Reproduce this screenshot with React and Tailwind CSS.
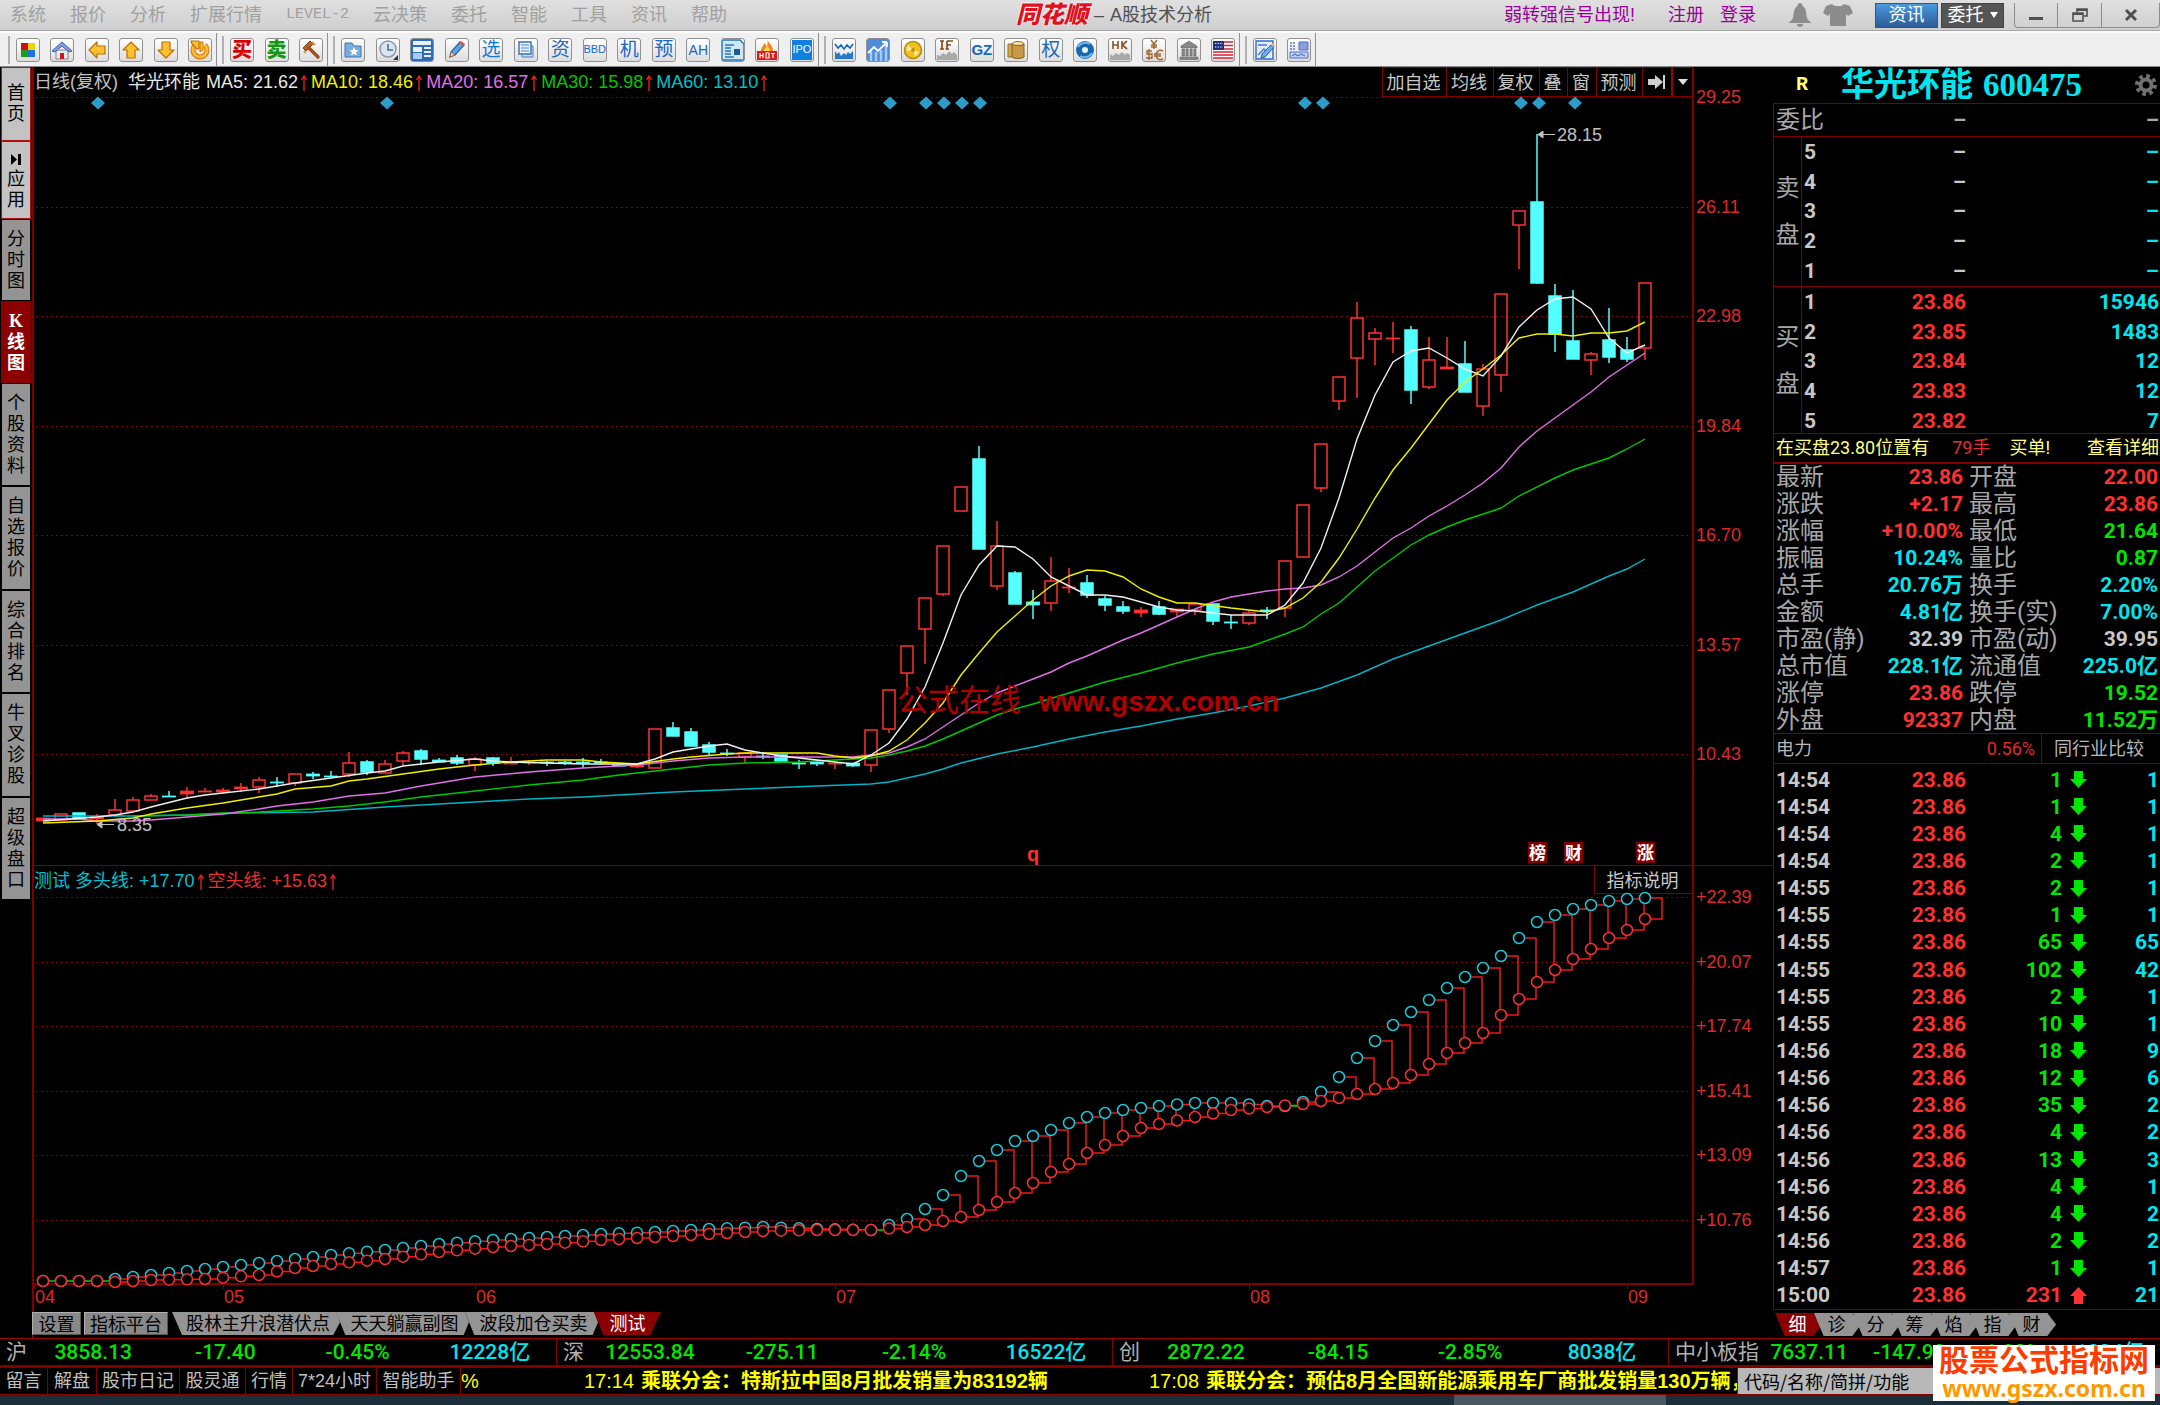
import React, { useState } from "react";

const MENUS = ["系统", "报价", "分析", "扩展行情", "LEVEL-2", "云决策", "委托", "智能", "工具", "资讯", "帮助"];

const SIDE_TABS = [
  { name: "首页", kind: "light", h: "h-[74px]" },
  { name: "应用", kind: "light", h: "h-[78px]", icon: true },
  { name: "分时图", kind: "grey", h: "h-[82px]" },
  { name: "K线图", kind: "active", h: "h-[82px]" },
  { name: "个股资料", kind: "grey", h: "h-[103px]" },
  { name: "自选报价", kind: "grey", h: "h-[104px]" },
  { name: "综合排名", kind: "grey", h: "h-[103px]" },
  { name: "牛叉诊股", kind: "grey", h: "h-[104px]" },
  { name: "超级盘口", kind: "grey", h: "h-[103px]" },
];

const SIDE_STYLES = {
  light: "bg-[#c3c3c3] text-black border border-[#b01010]",
  grey: "bg-[#949494] text-black border border-black",
  active: "bg-[#8b0000] text-white font-bold border border-[#8b0000]",
};

const MA_LABELS = [
  ["MA5: 21.62", "text-[#e8e8e8]"],
  ["MA10: 18.46", "text-[#f0f000]"],
  ["MA20: 16.57", "text-[#e070e8]"],
  ["MA30: 15.98", "text-[#00c800]"],
  ["MA60: 13.10", "text-[#00c0c8]"],
];

const CHART_BUTTONS = [
  ["加自选", "w-[64px]"],
  ["均线", "w-[47px]"],
  ["复权", "w-[46px]"],
  ["叠", "w-[28px]"],
  ["窗", "w-[29px]"],
  ["预测", "w-[46px]"],
];

// [colour, high, body top, body bottom, low]
const CANDLES = [
  ["r", 818, 818, 821, 821], ["r", 814, 814, 820, 820], ["c", 813, 813, 819, 819], ["r", 814, 817, 819, 824],
  ["r", 799, 810, 815, 815], ["r", 797, 800, 811, 812], ["r", 794, 796, 800, 800], ["c", 791, 796, 797, 797],
  ["r", 787, 791, 794, 797], ["r", 788, 791, 792, 792], ["r", 788, 790, 792, 793], ["r", 783, 787, 789, 792],
  ["r", 777, 780, 787, 793], ["c", 777, 782, 783, 787], ["r", 774, 774, 783, 786], ["c", 772, 774, 776, 779],
  ["c", 771, 776, 777, 777], ["r", 752, 763, 774, 777], ["c", 760, 762, 772, 775], ["r", 760, 764, 773, 773],
  ["r", 751, 753, 761, 765], ["c", 749, 751, 759, 765], ["c", 758, 760, 762, 762], ["c", 755, 758, 763, 765],
  ["r", 757, 759, 765, 771], ["c", 757, 758, 763, 766], ["r", 757, 762, 764, 764], ["r", 760, 762, 763, 765],
  ["c", 761, 762, 763, 766], ["c", 761, 762, 763, 765], ["c", 758, 762, 763, 768], ["c", 759, 762, 763, 764],
  ["c", 765, 765, 766, 766], ["r", 763, 765, 767, 768], ["r", 729, 729, 768, 768], ["c", 722, 728, 736, 736],
  ["c", 728, 732, 746, 746], ["c", 742, 745, 752, 756], ["c", 749, 753, 754, 756], ["r", 753, 753, 757, 763],
  ["c", 753, 756, 757, 759], ["c", 755, 755, 761, 761], ["c", 760, 763, 764, 769], ["c", 760, 762, 764, 766],
  ["r", 761, 763, 764, 769], ["c", 763, 763, 766, 767], ["r", 730, 730, 765, 772], ["r", 690, 690, 729, 733],
  ["r", 646, 646, 673, 695], ["r", 598, 598, 629, 664], ["r", 546, 546, 594, 596], ["r", 487, 487, 511, 511],
  ["c", 446, 459, 549, 549], ["r", 521, 546, 586, 590], ["c", 571, 573, 604, 604], ["c", 590, 602, 605, 619],
  ["r", 557, 581, 603, 611], ["r", 568, 587, 588, 593], ["c", 575, 583, 595, 598], ["c", 596, 599, 605, 611],
  ["c", 601, 607, 611, 614], ["r", 607, 610, 613, 617], ["c", 601, 607, 614, 615], ["r", 609, 609, 612, 617],
  ["r", 604, 604, 610, 615], ["c", 604, 604, 621, 625], ["c", 615, 622, 623, 629], ["r", 611, 613, 623, 625],
  ["c", 607, 610, 611, 619], ["r", 561, 561, 608, 617], ["r", 505, 505, 557, 557], ["r", 444, 444, 488, 492],
  ["r", 377, 377, 401, 410], ["r", 302, 318, 358, 398], ["r", 328, 333, 339, 365], ["r", 322, 338, 339, 353],
  ["c", 326, 330, 390, 404], ["r", 337, 360, 387, 389], ["r", 337, 367, 369, 369], ["c", 341, 364, 392, 392],
  ["r", 364, 369, 406, 416], ["r", 294, 294, 375, 392], ["r", 211, 211, 225, 269], ["c", 134, 202, 283, 284],
  ["c", 284, 296, 334, 352], ["c", 290, 341, 359, 359], ["r", 352, 354, 360, 375], ["c", 308, 340, 357, 363],
  ["c", 337, 350, 359, 362], ["r", 283, 283, 348, 360],
];

// [bar index, y]
const MA_LINES = [
  ["#00b4c8", [[0, 816], [5, 816], [8, 815], [11, 813], [15, 812], [19, 807], [24, 802], [27, 799], [30, 797], [33, 794], [35, 792], [39, 789], [43, 786], [46, 784], [47, 782], [48, 778], [49, 774], [50, 769], [51, 763], [53, 754], [55, 747], [57, 739], [59, 732], [61, 726], [63, 719], [65, 713], [67, 706], [69, 698], [71, 688], [73, 675], [75, 659], [77, 646], [79, 633], [81, 620], [83, 605], [85, 592], [87, 576], [88, 569], [89, 559]]],
  ["#00c800", [[5, 816], [8, 815], [10, 813], [12, 812], [15, 809], [17, 806], [19, 802], [21, 797], [24, 791], [27, 785], [30, 780], [32, 775], [34, 771], [37, 765], [39, 763], [42, 762], [46, 758], [47, 755], [48, 751], [49, 746], [50, 739], [51, 731], [52, 723], [53, 715], [54, 709], [55, 704], [57, 693], [59, 682], [61, 673], [63, 663], [65, 654], [67, 647], [69, 634], [70, 627], [71, 614], [72, 603], [73, 587], [74, 571], [75, 558], [76, 545], [77, 535], [78, 527], [79, 520], [81, 508], [82, 496], [84, 478], [85, 470], [87, 458], [88, 449], [89, 439]]],
  ["#e070e8", [[0, 819], [2, 819], [3, 821], [5, 821], [6, 820], [8, 817], [10, 814], [12, 809], [13, 806], [15, 802], [17, 796], [19, 793], [21, 786], [24, 777], [27, 772], [30, 768], [33, 765], [35, 761], [37, 758], [39, 757], [45, 757], [47, 753], [48, 747], [49, 739], [50, 727], [51, 715], [52, 703], [53, 693], [54, 686], [55, 679], [56, 672], [57, 663], [58, 656], [59, 648], [60, 640], [61, 633], [62, 625], [63, 617], [64, 609], [65, 602], [66, 597], [67, 594], [68, 591], [69, 589], [70, 588], [71, 585], [72, 577], [73, 566], [74, 552], [75, 538], [76, 528], [77, 516], [78, 506], [79, 495], [80, 483], [81, 468], [82, 447], [83, 431], [84, 418], [85, 405], [86, 392], [87, 377], [88, 365], [89, 353]]],
  ["#f0f000", [[0, 823], [3, 821], [5, 818], [6, 814], [8, 808], [10, 803], [11, 800], [13, 794], [14, 789], [16, 786], [17, 781], [18, 779], [20, 774], [22, 769], [24, 765], [26, 762], [28, 760], [30, 760], [31, 762], [33, 764], [35, 759], [36, 757], [38, 754], [39, 753], [43, 753], [44, 756], [45, 758], [46, 756], [47, 751], [48, 740], [49, 723], [50, 703], [51, 675], [52, 653], [53, 632], [54, 616], [55, 600], [56, 586], [57, 576], [58, 570], [59, 571], [60, 577], [61, 589], [62, 597], [63, 603], [64, 603], [66, 608], [67, 610], [68, 612], [69, 608], [70, 598], [71, 582], [72, 558], [73, 529], [74, 498], [75, 470], [76, 448], [77, 424], [78, 400], [79, 382], [80, 369], [81, 355], [82, 338], [83, 334], [84, 334], [85, 336], [86, 333], [87, 333], [88, 331], [89, 322]]],
  ["#f0f0f0", [[0, 821], [3, 817], [4, 815], [5, 812], [6, 807], [8, 798], [9, 795], [10, 793], [12, 789], [13, 786], [14, 783], [16, 778], [18, 773], [19, 771], [20, 766], [22, 762], [24, 759], [25, 761], [26, 762], [28, 763], [30, 764], [33, 764], [34, 759], [35, 752], [36, 749], [37, 746], [38, 744], [39, 750], [41, 756], [43, 760], [45, 764], [46, 755], [47, 743], [48, 719], [49, 687], [50, 643], [51, 595], [52, 565], [53, 546], [54, 547], [55, 559], [56, 577], [57, 586], [58, 595], [59, 595], [60, 597], [62, 607], [63, 610], [64, 611], [66, 615], [68, 615], [69, 605], [70, 583], [71, 548], [72, 498], [73, 439], [74, 395], [75, 362], [76, 351], [77, 348], [78, 358], [79, 369], [80, 376], [81, 356], [82, 327], [83, 310], [84, 299], [85, 297], [86, 309], [87, 338], [88, 353], [89, 345]]],
];

const GRID_MAIN = [[97, "29.25"], [207, "26.11"], [316, "22.98"], [426, "19.84"], [535, "16.70"], [645, "13.57"], [754, "10.43"]];
const GRID_SUB = [[897, "+22.39"], [962, "+20.07"], [1026, "+17.74"], [1091, "+15.41"], [1155, "+13.09"], [1220, "+10.76"]];
const DIAMONDS = [98, 387, 890, 926, 944, 962, 980, 1305, 1323, 1521, 1539, 1575];
const MONTHS = [[34, "04"], [223, "05"], [475, "06"], [835, "07"], [1249, "08"], [1627, "09"]];

const BULL = [[0, 1281], [3, 1281], [4, 1279], [5, 1277], [7, 1273], [9, 1269], [11, 1265], [14, 1259], [16, 1255], [19, 1250], [22, 1244], [25, 1240], [28, 1237], [31, 1234], [34, 1232], [37, 1229], [40, 1227], [43, 1229], [46, 1230], [47, 1225], [48, 1219], [49, 1209], [50, 1195], [51, 1176], [52, 1161], [53, 1150], [54, 1141], [55, 1136], [56, 1130], [57, 1123], [58, 1117], [59, 1113], [60, 1110], [62, 1106], [64, 1103], [66, 1103], [68, 1106], [69, 1106], [70, 1102], [71, 1092], [72, 1077], [73, 1058], [74, 1041], [75, 1025], [76, 1012], [77, 1000], [78, 988], [79, 977], [80, 968], [81, 956], [82, 938], [83, 922], [84, 915], [85, 909], [86, 905], [87, 901], [88, 899], [89, 898]];
const BEAR = [[0, 1281], [3, 1281], [4, 1282], [6, 1280], [9, 1279], [12, 1275], [14, 1268], [16, 1264], [19, 1259], [22, 1252], [25, 1247], [28, 1244], [31, 1240], [34, 1237], [37, 1234], [40, 1231], [43, 1230], [46, 1230], [48, 1227], [49, 1225], [50, 1221], [51, 1217], [52, 1210], [53, 1202], [54, 1193], [55, 1183], [56, 1172], [57, 1164], [58, 1153], [59, 1145], [60, 1136], [61, 1128], [62, 1124], [64, 1117], [66, 1110], [68, 1107], [70, 1104], [71, 1101], [72, 1098], [73, 1094], [74, 1089], [75, 1083], [76, 1075], [77, 1064], [78, 1053], [79, 1043], [80, 1033], [81, 1015], [82, 999], [83, 982], [84, 970], [85, 959], [86, 949], [87, 938], [88, 930], [89, 919]];

const SELL = [5, 4, 3, 2, 1];
const BUY = [[1, "23.86", "15946"], [2, "23.85", "1483"], [3, "23.84", "12"], [4, "23.83", "12"], [5, "23.82", "7"]];

const R = "text-[#ff3030]";
const G = "text-[#00e600]";
const C = "text-[#00e5ee]";
const W = "text-[#c8c8c8]";

const STATS = [
  ["最新", "23.86", R, "开盘", "22.00", R],
  ["涨跌", "+2.17", R, "最高", "23.86", R],
  ["涨幅", "+10.00%", R, "最低", "21.64", G],
  ["振幅", "10.24%", C, "量比", "0.87", G],
  ["总手", "20.76万", C, "换手", "2.20%", C],
  ["金额", "4.81亿", C, "换手(实)", "7.00%", C],
  ["市盈(静)", "32.39", W, "市盈(动)", "39.95", W],
  ["总市值", "228.1亿", C, "流通值", "225.0亿", C],
  ["涨停", "23.86", R, "跌停", "19.52", G],
  ["外盘", "92337", R, "内盘", "11.52万", G],
];

const TICKS = [
  ["14:54", 1, 1], ["14:54", 1, 1], ["14:54", 4, 1], ["14:54", 2, 1], ["14:55", 2, 1],
  ["14:55", 1, 1], ["14:55", 65, 65], ["14:55", 102, 42], ["14:55", 2, 1], ["14:55", 10, 1],
  ["14:56", 18, 9], ["14:56", 12, 6], ["14:56", 35, 2], ["14:56", 4, 2], ["14:56", 13, 3],
  ["14:56", 4, 1], ["14:56", 4, 2], ["14:56", 2, 2], ["14:57", 1, 1], ["15:00", 231, 21, true],
];

const INDEXES = [
  ["沪", "3858.13", "-17.40", "-0.45%", "12228亿"],
  ["深", "12553.84", "-275.11", "-2.14%", "16522亿"],
  ["创", "2872.22", "-84.15", "-2.85%", "8038亿"],
  ["中小板指", "7637.11", "-147.99", "-1.90%", "1234亿"],
];

const LINKS = [
  ["留言", "w-[48px]"],
  ["解盘", "w-[49px]"],
  ["股市日记", "w-[83px]"],
  ["股灵通", "w-[66px]"],
  ["行情", "w-[47px]"],
  ["7*24小时", "w-[84px]"],
  ["智能助手", "w-[84px]"],
];

const barX = (i) => 43 + i * 18;

function valueAt(line, i) {
  const k = line.findIndex((p) => p[0] >= i);
  if (k <= 0) return line[0][1];
  const [x0, y0] = line[k - 1];
  const [x1, y1] = line[k];
  return y0 + ((y1 - y0) * (i - x0)) / (x1 - x0);
}

function Arrow() {
  return (
    <svg className="mr-1 ml-[3px] inline-block h-4 w-[6px] align-[-3px]" viewBox="0 0 6 16" fill="none" stroke="#e02020" strokeWidth="1.4">
      <path d="M3 16V1M0.5 5L3 1l2.5 4" />
    </svg>
  );
}

function TextIcon({ children, className }) {
  return <span className={"leading-none " + className}>{children}</span>;
}

function Draw({ children }) {
  return (
    <svg className="size-full" viewBox="0 0 22 22" fill="none">
      {children}
    </svg>
  );
}

const ARROW_PROPS = { fill: "#ffc030", stroke: "#b87008", strokeWidth: 1.2, strokeLinejoin: "round" };

const TOOL_GROUPS = [
  {
    width: "w-[196px]",
    items: [
      ["板块", <Draw><path fill="#d01010" d="M4 4h7v7H4z" /><path fill="#e8d800" d="M11 4h7v7h-7z" /><path fill="#18a018" d="M4 11h7v7H4z" /><path fill="#2070e0" d="M11 11h7v7h-7z" /></Draw>],
      ["首页", <Draw><path d="M5 11h12v9H5z" fill="#e8e8f0" stroke="#888" /><path d="M1 12L11 3l10 9-3 1-7-6-7 6z" fill="#7f9fe0" stroke="#4060b0" /><path fill="#c81818" d="M9 14h4v6H9z" /></Draw>],
      ["后退", <Draw><path {...ARROW_PROPS} d="M3 11l8-8v4h8v8h-8v4z" /></Draw>],
      ["上移", <Draw><path {...ARROW_PROPS} d="M11 3l8 8h-4v8H7v-8H3z" /></Draw>],
      ["下移", <Draw><path {...ARROW_PROPS} d="M11 19l8-8h-4V3H7v8H3z" /></Draw>],
      ["刷新", <Draw><path d="M6 6a7 7 0 1 0 10 0" stroke="#d07808" strokeWidth="5" /><path d="M6 6a7 7 0 1 0 10 0" stroke="#ffb830" strokeWidth="3" /><path {...ARROW_PROPS} d="M2 2h8v8H8L3 5z" /><path d="M11 3h3v8l-3 2z" fill="#ffb830" stroke="#d07808" /></Draw>],
    ],
  },
  {
    width: "w-[93px]",
    items: [
      ["买", <TextIcon className="text-[20px] font-black text-[#d80000]">买</TextIcon>],
      ["卖", <TextIcon className="text-[20px] font-black text-[#109810]">卖</TextIcon>],
      ["委托", <Draw><path d="M3 9l7-7 3 3-7 7z" fill="#b86428" stroke="#7a3a10" /><path d="M9 9l9 9" stroke="#a05020" strokeWidth="3.5" strokeLinecap="round" /><path d="M4 12l2 2M12 3l3 3" stroke="#d89060" strokeWidth="2" /></Draw>],
    ],
  },
  {
    width: "w-[473px]",
    items: [
      ["自选股", <Draw><path d="M3 4h7l2 3h7v11H3z" fill="#7aaede" stroke="#3c74b0" /><path fill="#fff" d="M12 8l1.3 3 3.2.2-2.5 2 .9 3.2L12 14.700l-2.900 1.700.900-3.200-2.500-2 3.200-.2z" /></Draw>],
      ["定时", <Draw><circle cx="11" cy="10" r="8" fill="#dce4ec" stroke="#8898a8" strokeWidth="1.500" /><path d="M11 5v6h5" stroke="#4070b0" strokeWidth="1.600" /><path d="M21 16v5h-5z" fill="#333" /></Draw>],
      ["资讯", <Draw><path fill="#2e6cb8" d="M0 0h22v22H0z" /><path fill="#e8f2fc" d="M2 2h18v4H2zM2 8h9v5H2zM13 8h7v2h-7zM13 12h7v2h-7zM13 16h7v2h-7z" /><path fill="#a8ccf0" d="M2 14h9v6H2z" /></Draw>],
      ["画线", <Draw><path d="M4 18l1-5 9-10 4 3-9 10z" fill="#58a8e8" stroke="#2868a8" strokeWidth="1.300" /><path d="M13 4l4 3 2-2-4-3z" fill="#e05050" /><path d="M4 18l5-2-4-3z" fill="#f0d0a0" stroke="#805020" strokeWidth=".6" /></Draw>],
      ["选", <TextIcon className="text-[19px] text-[#1878d0]">选</TextIcon>],
      ["报表", <Draw><path d="M7 7h11v11H7z" fill="#c8dcf0" stroke="#4c80b8" /><path d="M4 3h12v12H4z" fill="#e8f2fc" stroke="#3c70b0" strokeWidth="1.400" /><path d="M6 6h8M6 9h8M6 12h8" stroke="#5088c8" /></Draw>],
      ["资", <TextIcon className="text-[19px] text-[#2868b8]">资</TextIcon>],
      ["BBD", <TextIcon className="text-[11px] text-[#1868c8]">BBD</TextIcon>],
      ["机", <TextIcon className="text-[19px] text-[#1868c8]">机</TextIcon>],
      ["预", <TextIcon className="text-[19px] text-[#1868c8]">预</TextIcon>],
      ["AH", <TextIcon className="text-[14px] text-[#1868c8]">AH</TextIcon>],
      ["公告", <Draw><path d="M0 1h18l4 4v16H0z" fill="#cfe6f6" stroke="#2878b0" strokeWidth="1.500" /><path d="M3 6h9M3 9h6M3 12h6M3 15h6M3 18h9" stroke="#2878b0" strokeWidth="1.300" /><path fill="#1c5c90" d="M12 10h6v6h-6z" /></Draw>],
      ["热点", <Draw><path d="M11 0c1 4 6 6 6 12H5c0-4 3-5 3-8 2 1 2 2 2 4 2-2 2-4 1-8z" fill="#f88020" /><path d="M11 6c1 2 3 4 3 6H8c0-3 3-3 3-6z" fill="#ffd840" /><path fill="#e01818" d="M1 12h20v9H1z" /><path d="M4 14v5M7 14v5M4 16.500h3M10 14h3v5h-3zM15 14.500h4M17 14.500v4.500" stroke="#fff" strokeWidth="1.200" /></Draw>],
      ["IPO", <TextIcon className="flex size-5 items-center justify-center bg-[#1080e0] text-[11px] text-white">IPO</TextIcon>],
    ],
  },
  {
    width: "w-[403px]",
    items: [
      ["大盘", <Draw><path d="M2 5l3 4 3-3 3 4 3-4 3 3 3-4" stroke="#1868b8" strokeWidth="1.600" /><path fill="#2878c8" d="M2 20v-8l2 3 2-2 2 4 3-3 2 2 2-3 2 2 3-3v8z" /></Draw>],
      ["走势", <Draw><path fill="#4c8cd8" d="M0 0h22v22H0z" /><path d="M4 22V12M9 22v-9M14 22V11M19 22V6" stroke="#a8ccf0" strokeWidth="2.500" /><path d="M1 14l6-6 4 4 9-9M20 3h-5M20 3v5" stroke="#fff" strokeWidth="1.800" /></Draw>],
      ["期货", <Draw><circle cx="11" cy="11" r="8.500" fill="#f0c020" stroke="#b88808" strokeWidth="1.500" /><path d="M11 11L6 6a7 7 0 0 0-1 6zM11 11l2 6a7 7 0 0 0 4-4z" fill="#fff0a0" /><circle cx="11" cy="11" r="2" fill="#c89010" /></Draw>],
      ["IF", <Draw><path d="M4 2h4M6 2v8M4 10h4M11 2v8M11 2h6M11 6h4M9.500 10h3.500" stroke="#8a4a18" strokeWidth="1.700" /><path fill="#a8a8a8" d="M1 21v-5l3 1 3-3 3 2 3-4 3 3 2-2 3 3v5z" /></Draw>],
      ["GZ", <TextIcon className="text-[15px] font-bold text-[#1868b8]">GZ</TextIcon>],
      ["基金", <Draw><path d="M3 5h9v13H3z" fill="#d8a848" stroke="#907028" /><ellipse cx="13" cy="5" rx="6" ry="2.500" fill="#f8e0a0" stroke="#907028" /><path d="M7 5v13c2 2 10 2 12 0V5c-2 2-10 2-12 0z" fill="#c89848" stroke="#806020" /></Draw>],
      ["权", <TextIcon className="text-[19px] text-[#1868b8]">权</TextIcon>],
      ["全球", <Draw><circle cx="11" cy="11" r="9" fill="#1868b0" /><path d="M4 8c3-5 9-5 12-3M18 14c-3 5-9 5-12 3" stroke="#70b8e8" strokeWidth="2" /><circle cx="11" cy="11" r="3" fill="#e8f4ff" /></Draw>],
      ["HK", <Draw><path d="M4 2v8M9 2v8M4 6h5M13 2v8M18 2l-4.500 4L18 10" stroke="#8a5a30" strokeWidth="1.700" /><path fill="#a8a8a8" d="M1 21v-6l3 2 3-3 3 2 3-3 3 3 2-2 3 2v5z" /></Draw>],
      ["外汇", <Draw><path d="M8 1l3 4 3-4M11 5v5M8 6h6M8 8h6" stroke="#a06830" strokeWidth="1.400" /><path d="M9 12H4v3h5v4H3M6 10v11M20 12c-4-2-7 1-7 4s3 6 7 4M11 15h7M11 17h7" stroke="#a06830" strokeWidth="1.400" /></Draw>],
      ["债券", <Draw><path d="M11 2l8 5v2H3V7zM4 10h2.500v7H4zM8 10h2.200v7H8zM12 10h2.200v7H12zM15.800 10H18v7h-2.200zM2 18h18v2.500H2z" fill="#888" stroke="#555" strokeWidth=".5" /></Draw>],
      ["美股", <Draw><path fill="#fff" d="M1 2h20v18H1z" /><path d="M1 3h20M1 6.500h20M1 10h20M1 13h20M1 16h20M1 19h20" stroke="#d02030" strokeWidth="1.600" /><path fill="#203080" d="M1 2h11v9H1z" /><path d="M3 4.500h8M3 8h8" stroke="#fff" strokeDasharray="1.300 1.300" /></Draw>],
    ],
  },
  {
    width: "w-[58px]",
    items: [
      ["编辑", <Draw><path d="M2 2h17v18H2z" fill="#e0ecfc" stroke="#3868c0" strokeWidth="1.400" /><path d="M4 6h9M4 16l6-6 3 3 5-6" stroke="#4878c8" strokeWidth="1.500" /><path d="M7 19l1-4 9-9 3 2-9 10z" fill="#68b0e8" stroke="#2858a0" /><path d="M17 6l3 2 1-2-2-2z" fill="#f0b060" /></Draw>],
      ["布局", <Draw><path d="M2 4h6M2 7h6M2 10h6" stroke="#5878c0" strokeWidth="1.500" strokeDasharray="2 1" /><path fill="#88a0e0" d="M11 3h9v8h-9z" stroke="#5070c0" /><path fill="#c0d0f8" d="M2 13h18v6H2z" stroke="#5070c0" /><path d="M4 17l3-2 3 2 3-2 4 2" stroke="#3858b0" /></Draw>],
    ],
  },
];

function TitleBar() {
  return (
    <header className="flex h-[31px] items-center border-b border-[#a8a8a8] bg-gradient-to-b from-[#e0e0e0] to-[#cfcfcf] pl-[10px] text-[18px] leading-[30px]">
      <nav className="flex flex-1 items-center gap-6 text-[#a0a0a0]">
        {MENUS.map((m) => (
          <button key={m} className={m === "LEVEL-2" ? "[font-family:'Liberation_Mono',monospace] text-[15px]" : ""}>
            {m}
          </button>
        ))}
      </nav>
      <h1 className="ml-[58px] flex items-center gap-[6px] text-[#505050]">
        <span className="text-[24px] font-black text-[#e01020] italic [text-shadow:0_0_2px_#fff,0_0_2px_#fff]">同花顺</span>
        <span>–</span>
        <span>A股技术分析</span>
      </h1>
      <div className="flex flex-1 items-center justify-end text-[#990099]">
        <a href="#signal">弱转强信号出现!</a>
        <a href="#register" className="ml-[33px]">注册</a>
        <a href="#login" className="ml-4">登录</a>
        <button aria-label="提醒" className="ml-[33px]">
          <svg className="h-6 w-[22px]" viewBox="0 0 22 24" fill="#8c8c8c">
            <path d="M11 0c2 0 2.500 1.500 2.500 3C18 5 17 12 18 15c.500 2 4 4 4 5H0c0-1 3.500-3 4-5C5 12 4 5 8.500 3 8.500 1.500 9 0 11 0zM8 21h6c0 4-6 4-6 0z" />
          </svg>
        </button>
        <button aria-label="换肤" className="mr-[22px] ml-3">
          <svg className="h-[22px] w-[30px]" viewBox="0 0 30 22" fill="#8c8c8c">
            <path d="M9 0c2 3 10 3 12 0l6 2 3 7-5 3-2-2v12H7V10l-2 2-5-3 3-7z" />
          </svg>
        </button>
        <button className="h-[25px] w-[63px] border border-[#2a5a90] bg-gradient-to-b from-[#4a9ae0] to-[#2c5c98] leading-[22px] text-white">资讯</button>
        <button className="ml-[3px] flex h-[25px] w-[63px] items-center justify-center gap-[6px] border border-[#444] bg-[#555] leading-[22px] text-white">
          委托
          <svg className="h-[6px] w-2" viewBox="0 0 8 6" fill="#fff"><path d="M0 0h8L4 6z" /></svg>
        </button>
        <div className="ml-[10px] flex h-[25px] rounded-b-sm border border-t-0 border-[#8c8c8c]">
          <button aria-label="最小化" className="flex w-[43px] items-center justify-center border-r border-[#8c8c8c]">
            <svg className="size-4" viewBox="0 0 16 16"><path fill="#505050" d="M1 10h14v3H1z" /></svg>
          </button>
          <button aria-label="还原" className="flex w-[44px] items-center justify-center border-r border-[#8c8c8c]">
            <svg className="size-4" viewBox="0 0 16 16" fill="none" stroke="#505050" strokeWidth="1.600"><path d="M5 5V2h10v7h-3M1 6h10v8H1z" /><path d="M1 7h10M5 3h10" strokeWidth="2" /></svg>
          </button>
          <button aria-label="关闭" className="flex w-[57px] items-center justify-center">
            <svg className="size-4" viewBox="0 0 16 16" stroke="#505050" strokeWidth="3"><path d="M3 3l10 10M13 3L3 13" /></svg>
          </button>
        </div>
      </div>
    </header>
  );
}

function ToolBar() {
  return (
    <div className="flex h-9 items-center gap-[3px] border-t-2 border-b border-t-[#fafafa] border-b-[#888] bg-[#efefef] pl-[6px]">
      {TOOL_GROUPS.map((g) => (
        <div key={g.width} className="flex h-full items-center border-r border-[#909090] pr-1">
          <span className="mr-[6px] h-7 w-1 border-r-2 border-[#b0b0b0]" />
          <div className={"flex justify-between " + g.width}>
            {g.items.map(([name, icon]) => (
              <button
                key={name}
                aria-label={name}
                className="flex size-6 items-center justify-center overflow-hidden rounded-[3px] border border-[#909090] bg-gradient-to-b from-white to-[#dcdcdc]"
              >
                {icon}
              </button>
            ))}
          </div>
        </div>
      ))}
    </div>
  );
}

function SideBar() {
  return (
    <nav className="flex w-[34px] shrink-0 flex-col border-r-2 border-[#800000] pl-px">
      {SIDE_TABS.map((t) => (
        <button
          key={t.name}
          className={"flex w-[30px] flex-col items-center justify-center text-[18px] leading-[21px] " + t.h + " " + SIDE_STYLES[t.kind]}
        >
          {t.icon && (
            <svg className="my-1 h-[11px] w-[10px]" viewBox="0 0 10 11"><path d="M0 0l6 5.500L0 11zM7 0h3v11H7z" /></svg>
          )}
          {t.name.split("").map((ch) => (
            <span key={ch} className={ch === "K" ? "[font-family:'Liberation_Serif',serif]" : ""}>{ch}</span>
          ))}
        </button>
      ))}
    </nav>
  );
}

function Candle({ i, bar }) {
  const [kind, high, top, bottom, low] = bar;
  const x = barX(i);
  const flat = bottom - top <= 3;
  const color = kind === "r" ? "#ff3030" : "#54ffff";
  return (
    <g stroke={color} strokeWidth="1.5" fill={kind === "c" || flat ? color : "none"}>
      {high < top && <path d={`M${x} ${high}V${top}`} />}
      {low > bottom && <path d={`M${x} ${bottom}V${low}`} />}
      {flat ? (
        <rect x={x - 6.5} y={top} width="13" height={bottom - top} strokeWidth="0.8" />
      ) : (
        <rect x={x - 6} y={top} width="12" height={bottom - top} />
      )}
    </g>
  );
}

function Grid({ rows }) {
  return rows.map(([y, label]) => (
    <g key={label}>
      <path d={`M36 ${y}.500H1692`} stroke="#800000" strokeWidth="1" strokeDasharray="2 3" />
      <text x="1696" y={y + 6} fontSize="18" fill="#e02828">{label}</text>
    </g>
  ));
}

function MainChart() {
  return (
    <svg className="block w-full overflow-visible" viewBox="34 97 1739 768">
      <Grid rows={GRID_MAIN} />
      <path d="M1693 97V865" stroke="#800000" strokeWidth="2" />
      {DIAMONDS.map((x) => (
        <path key={x} d={`M${x} 96.500l7 6.500-7 6.500-7-6.500z`} fill="#2c9cc8" />
      ))}
      {CANDLES.map((bar, i) => (
        <Candle key={i} i={i} bar={bar} />
      ))}
      {MA_LINES.map(([color, pts]) => (
        <polyline key={color} fill="none" stroke={color} strokeWidth="1.400" points={pts.map(([i, y]) => barX(i) + "," + y).join(" ")} />
      ))}
      <g stroke="#c0c0c0" fill="#c0c0c0" fontSize="18">
        <path d="M1538 134.500h17M1538 134.500l5-3.500v7zM97 824.500h17M97 824.500l5-3.500v7z" />
        <text x="1557" y="141" stroke="none">28.15</text>
        <text x="117" y="831" stroke="none">8.35</text>
      </g>
      <g fill="#b00000">
        <text x="897" y="711" fontSize="31">公式在线</text>
        <text x="1039" y="711" fontSize="28" fontWeight="bold">www.gszx.com.cn</text>
      </g>
      <text x="1027" y="861" fontSize="20" fontWeight="bold" fill="#ff3030">q</text>
      {[[1528, "榜"], [1564, "财"], [1636, "涨"]].map(([x, label]) => (
        <g key={label}>
          <rect x={x} y="842" width="19" height="21" fill="#800000" />
          <text x={x + 1} y="859" fontSize="17" fontWeight="bold" fill="#fff">{label}</text>
        </g>
      ))}
    </svg>
  );
}

function SubChart() {
  const bars = CANDLES.map((_, i) => [barX(i), valueAt(BULL, i), valueAt(BEAR, i)]);
  return (
    <svg className="block w-full overflow-visible" viewBox="34 894 1739 417">
      <Grid rows={GRID_SUB} />
      <path d="M1693 894V1284H34" stroke="#800000" strokeWidth="2" fill="none" />
      {bars.map(([x, a, b]) => (
        <path key={x} d={`M${x} ${a}H${x + 17}V${b}H${x}`} stroke={b > a ? "#f01818" : "#00d000"} strokeWidth="1.500" fill="none" />
      ))}
      {bars.map(([x, a, b]) => (
        <g key={x} strokeWidth="1.500" fill="#000">
          <circle cx={x} cy={a} r="5.500" stroke="#18c8d8" />
          <circle cx={x} cy={b} r="5.500" stroke="#f83030" />
        </g>
      ))}
      {MONTHS.map(([x, label]) => (
        <g key={label}>
          <path d={`M${x}.500 1284v5`} stroke="#800000" />
          <text x={x + 1} y="1303" fontSize="18" fill="#e02828">{label}</text>
        </g>
      ))}
    </svg>
  );
}

function ChartPanel() {
  return (
    <section className="flex min-w-0 flex-1 flex-col">
      <div className="flex h-[30px] items-center pr-[79px] text-[18px] leading-[30px]">
        <p className="flex flex-1 items-center whitespace-nowrap">
          <span className="mr-[10px] text-[#c0c0c0]">日线(复权)</span>
          <span className="mr-[6px] text-[#e8e8e8]">华光环能</span>
          {MA_LABELS.map(([label, color]) => (
            <span key={label} className={color}>
              {label}
              <Arrow />
            </span>
          ))}
        </p>
        <div className="flex h-full border-y border-r-2 border-[#800000] text-[#c8c8c8]">
          {CHART_BUTTONS.map(([label, w]) => (
            <button key={label} className={"border-l border-[#800000] pr-[2px] " + w}>{label}</button>
          ))}
          <button aria-label="收起" className="flex w-[29px] items-center justify-center border-l border-[#800000]">
            <svg className="h-4 w-[18px]" viewBox="0 0 18 16" fill="#d0d0d0"><path d="M0 5h7V1l8 7-8 7v-4H0zM15 1h2v14h-2z" /></svg>
          </button>
          <button aria-label="更多" className="flex w-[21px] items-center justify-center border-l-2 border-[#a00000]">
            <svg className="h-[6px] w-[10px]" viewBox="0 0 10 6" fill="#e0e0e0"><path d="M0 0h10L5 6z" /></svg>
          </button>
        </div>
      </div>
      <MainChart />
      <div className="flex h-[29px] border-t border-[#800000] pr-[79px] text-[18px] leading-[31px]">
        <p className="flex-1 text-[#00c0d0]">
          测试 多头线: +17.70<Arrow />
          <span className="text-[#e83030]">空头线: +15.63<Arrow /></span>
        </p>
        <button className="h-full w-[100px] border-r-2 border-b border-l border-[#800000] pr-[2px] text-[#c8c8c8]">指标说明</button>
      </div>
      <SubChart />
      <div className="flex h-[26px] items-start pt-px text-[18px] leading-[24px] text-black">
        <button className="ml-[-2px] h-[23px] w-[49px] border border-[#b0b0b0] border-r-[#555] border-b-[#555] bg-[#888]">设置</button>
        <button className="ml-[3px] h-[23px] w-[84px] border border-[#b0b0b0] border-r-[#555] border-b-[#555] bg-[#888]">指标平台</button>
        <div className="ml-[4px] flex">
          <button className="h-[23px] w-[168px] bg-[#949494] pl-1 [clip-path:polygon(0_0,98%_0,100%_45%,96%_100%,6%_100%)]">股林主升浪潜伏点</button>
          <button className="-ml-[4px] h-[23px] w-[133px] bg-[#949494] pl-1 [clip-path:polygon(0_0,97%_0,100%_45%,96%_100%,7%_100%)]">天天躺赢副图</button>
          <button className="-ml-[4px] h-[23px] w-[133px] bg-[#949494] pl-1 [clip-path:polygon(0_0,97%_0,100%_45%,96%_100%,7%_100%)]">波段加仓买卖</button>
          <button className="-ml-[4px] h-[23px] w-[67px] bg-[#8b0000] text-white [clip-path:polygon(0_0,100%_0,84%_100%,14%_100%)]">测试</button>
        </div>
      </div>
    </section>
  );
}

function Depth({ label, rows, height }) {
  return (
    <div className={"flex border-t border-[#800000] " + height}>
      <div className="flex w-[28px] flex-col items-center justify-center gap-[23px] border-r border-[#800000] text-[24px] leading-6 text-[#a8a8a8]">
        <span>{label}</span>
        <span>盘</span>
      </div>
      <table className="h-[149px] flex-1 text-[21px] leading-6">
        <tbody>
          {rows.map(([n, price, vol]) => (
            <tr key={n}>
              <td className="w-[40px] pl-[2px] text-[#c8c8c8]">{n}</td>
              <td className={"w-[124px] text-right " + (price ? "text-[#ff3030]" : "text-[#c8c8c8]")}>{price || "–"}</td>
              <td className="pr-px text-right text-[#00e5ee]">{vol || "–"}</td>
            </tr>
          ))}
        </tbody>
      </table>
    </div>
  );
}

const QUOTE_TABS = ["细", "诊", "分", "筹", "焰", "指", "财"];

function QuotePanel() {
  const [tab, setTab] = useState("细");
  return (
    <aside className="flex w-[387px] shrink-0 flex-col [font-family:Roboto,'Noto_Sans_CJK_SC',sans-serif]">
      <div className="flex h-9 items-center">
        <span className="w-[68px] pl-[23px] [font-family:'Liberation_Mono',monospace] text-[20px] font-bold text-[#ffff80]">R</span>
        <h2 className="flex flex-1 items-center gap-[10px] [font-family:'Liberation_Serif','Noto_Sans_CJK_SC',serif] text-[33px] leading-9 font-bold text-[#00e5ee]">
          华光环能 <span>600475</span>
        </h2>
        <button aria-label="设置" className="mr-[3px]">
          <svg className="size-[22px]" viewBox="0 0 22 22" fill="none" stroke="#707070">
            <circle cx="11" cy="11" r="5.500" strokeWidth="4" />
            <circle cx="11" cy="11" r="9" strokeWidth="4" strokeDasharray="3.600 3.460" />
          </svg>
        </button>
      </div>
      <div className="flex flex-1 flex-col border-l border-[#800000]">
        <div className="flex h-[33px] items-center border-t border-[#800000] pl-[2px] text-[24px] leading-8 text-[#a8a8a8]">
          <span className="w-[188px]">委比</span>
          <span className="-ml-[11px] flex-1 text-[21px] font-bold">–</span>
          <span className="pr-px text-[21px] font-bold">–</span>
        </div>
        <div className="font-bold [&_span]:font-normal">
          <Depth label="卖" height="h-[150px]" rows={SELL.map((n) => [n])} />
          <Depth label="买" height="h-[147px]" rows={BUY} />
        </div>
        <p className="flex h-[29px] items-center justify-between border-t border-[#800000] pr-px pl-[2px] text-[18px] leading-7 text-[#ffff80]">
          <span>在买盘23.80位置有</span>
          <span className="ml-1 text-[#e03030]">79手</span>
          <span>买单!</span>
          <a href="#detail" className="ml-[18px]">查看详细</a>
        </p>
        <table className="h-[271px] w-full table-fixed border-t-2 border-[#800000] text-[21px] leading-[26px]">
          <tbody>
            {STATS.map(([a, av, ac, b, bv, bc]) => (
              <tr key={a}>
                <th className="w-[92px] pl-[2px] text-left text-[24px] font-normal whitespace-nowrap text-[#a8a8a8]">{a}</th>
                <td className={"w-[97px] text-right font-bold " + ac}>{av}</td>
                <th className="w-[101px] pl-[6px] text-left text-[24px] font-normal whitespace-nowrap text-[#a8a8a8]">{b}</th>
                <td className={"pr-[2px] text-right font-bold " + bc}>{bv}</td>
              </tr>
            ))}
          </tbody>
        </table>
        <div className="flex h-[30px] items-center border-t border-[#800000] pl-[2px] text-[18px] leading-[30px] text-[#b8b8b8]">
          <span className="flex-1">电力</span>
          <span className="pr-[6px] text-[#e02828]">0.56%</span>
          <button className="h-full w-[119px] border-l border-[#800000] pr-1 text-center">同行业比较</button>
        </div>
        <div className="border-y border-[#800000] pt-[2px]">
          <table className="h-[543px] w-full text-[21px] leading-6 font-bold">
            <tbody>
              {TICKS.map(([time, vol, count, up], i) => (
                <tr key={i}>
                  <td className="w-[80px] pl-[2px] text-[#c8c8c8]">{time}</td>
                  <td className="w-[112px] text-right text-[#ff3030]">23.86</td>
                  <td className={"w-[96px] text-right " + (up ? "text-[#ff3030]" : "text-[#00e600]")}>{vol}</td>
                  <td className="pl-2">
                    <svg className="h-[17px] w-[17px]" viewBox="0 0 17 17">
                      {up ? <path fill="#ff3030" d="M8.500 0L17 9h-4v8H4V9H0z" /> : <path fill="#00e600" d="M8.500 17L17 8h-4V0H4v8H0z" />}
                    </svg>
                  </td>
                  <td className="pr-px text-right text-[#00e5ee]">{count}</td>
                </tr>
              ))}
            </tbody>
          </table>
        </div>
      </div>
      <div className="flex h-[28px] pt-[3px] text-[18px] leading-[24px] text-black">
        {QUOTE_TABS.map((t) => (
          <button
            key={t}
            onClick={() => setTab(t)}
            className={
              "-mr-[10px] ml-px h-[23px] w-[48px] pr-[3px] first:ml-[2px] [clip-path:polygon(0_0,80%_0,98%_50%,80%_100%,20%_100%)] " +
              (t === tab ? "bg-[#8b0000] text-white" : "bg-[#949494]")
            }
          >
            {t}
          </button>
        ))}
      </div>
    </aside>
  );
}

function IndexBar() {
  return (
    <div className="grid h-[27px] grid-cols-[557fr_556fr_556fr_491fr] border-t border-[#a00000] [font-family:Roboto,'Noto_Sans_CJK_SC',sans-serif] text-[21px] leading-[26px]">
      {INDEXES.map(([name, last, diff, pct, amount]) => (
        <div key={name} className="flex border-r border-[#800000] pl-[6px] whitespace-nowrap last:border-r-0">
          <span className="text-[#b0b0b0]">{name}</span>
          {[last, diff, pct].map((v) => (
            <span key={v} className="flex-1 text-center font-medium text-[#00e600]">{v}</span>
          ))}
          <span className="flex-1 text-center font-medium text-[#00e5ee]">{amount}</span>
        </div>
      ))}
    </div>
  );
}

function NewsBar() {
  return (
    <div className="flex h-[30px] items-stretch border-t-[3px] border-b border-[#800000] text-[18px] leading-[27px] whitespace-nowrap">
      {LINKS.map(([label, w]) => (
        <a key={label} href="#link" className={"border-r border-[#800000] text-center text-[#c0c0c0] " + w}>{label}</a>
      ))}
      <div className="flex flex-1 overflow-hidden text-[20px] text-[#ffff00]">
        <span className="w-[123px] shrink-0">%</span>
        <span className="w-[565px] shrink-0 font-bold"><span className="mr-[7px] font-normal">17:14</span>乘联分会：特斯拉中国8月批发销量为83192辆</span>
        <span className="font-bold"><span className="mr-[7px] font-normal">17:08</span>乘联分会：预估8月全国新能源乘用车厂商批发销量130万辆，</span>
      </div>
      <input
        aria-label="代码/名称/简拼/功能"
        placeholder="代码/名称/简拼/功能"
        className="w-[423px] border-l border-[#a00000] bg-[#b8b8b8] pl-[6px] [font-family:'Noto_Sans_CJK_SC',sans-serif] text-black placeholder:text-black"
      />
    </div>
  );
}

export default function App() {
  return (
    <div className="relative flex min-h-screen flex-col overflow-hidden bg-black [font-family:'Liberation_Sans','Noto_Sans_CJK_SC',sans-serif]">
      <TitleBar />
      <ToolBar />
      <main className="flex">
        <SideBar />
        <ChartPanel />
        <QuotePanel />
      </main>
      <IndexBar />
      <NewsBar />
      <div className="min-h-[11px] flex-1 bg-[#1c2e3a]">
        <div className="ml-[1454px] h-[11px] w-[212px] bg-[#4a5660]" />
      </div>
      <div className="absolute right-[5px] bottom-[5px] w-[222px] bg-white text-center font-bold [font-family:'Noto_Sans','Noto_Sans_CJK_SC',sans-serif]">
        <p className="text-[30px] leading-[30px] text-[#ff3c00]">股票公式指标网</p>
        <p className="text-[23px] leading-[26px] text-[#ff9900]">www.gszx.com.cn</p>
      </div>
    </div>
  );
}
